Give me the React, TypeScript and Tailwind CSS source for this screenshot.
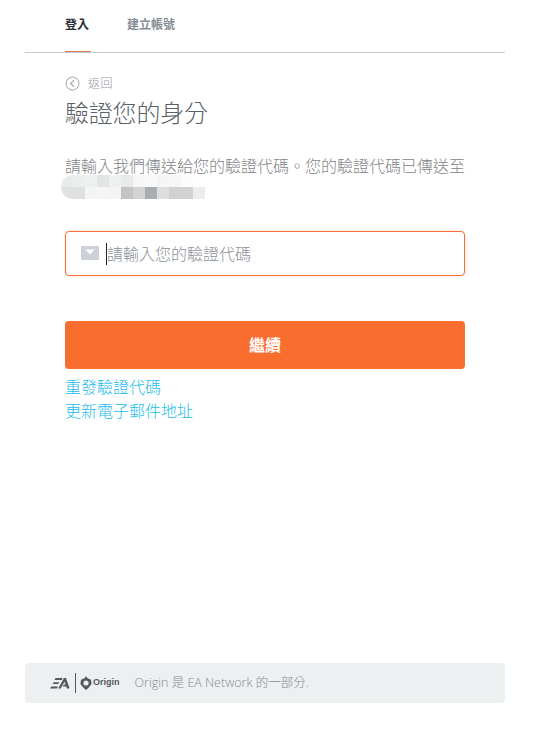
const font = { fontFamily: '"Open Sans","Noto Sans CJK TC",sans-serif' };
const row1 = ['#e9eaea','#eceded','#eeefef','#e3e4e6','#eeefef','#e9eaea','#f6f6f6','#f9f9f9','#f4f5f5','#f7f7f7','#fcfcfc','#ffffff'];
const row2 = ['#e0e1e2','#dfe0e1','#f3f4f4','#f5f5f5','#f4f4f4','#c2c4c6','#d2d4d4','#a9adb0','#dddfdf','#cfd1d3','#d0d2d3','#ebecec'];

function Pixels({ cols, round }: { cols: string[]; round: string }) {
  return (
    <div className={`flex h-[12px] overflow-hidden ${round}`}>
      {cols.map((c, i) => (
        <div key={i} className="h-full w-[12px]" style={{ backgroundColor: c }} />
      ))}
    </div>
  );
}

export default function App() {
  return (
    <div className="h-[753px] w-[545px] bg-white pl-[25px] pr-[40px] flex flex-col font-light" style={font}>
      <div className="flex h-[53px] gap-[37px] border-b border-[#c8c9cd] pl-[40px] text-[12px]">
        <div className="relative flex h-[52px] w-[26px] items-start justify-center pt-[16px] font-bold text-[#2b3038] whitespace-nowrap -indent-[2px]">
          登入
          <div className="absolute bottom-0 left-0 h-[1px] w-[26px] bg-[#d9764e]" />
        </div>
        <div className="-ml-[1px] pt-[16px] font-bold text-[#858a92] whitespace-nowrap">建立帳號</div>
      </div>

      <div className="flex flex-col pl-[40px] w-[440px]">
        <div className="mt-[23px] flex h-[16px] items-center gap-[8px] text-[12px] tracking-[0.5px] text-[#93979c]">
          <svg className="-mt-[1px]" width="15" height="15" viewBox="0 0 15 15" fill="none" stroke="#a3a7ab" strokeWidth="1">
            <circle cx="7.5" cy="7.5" r="6.5" />
            <path d="M9 4.2 5.7 7.5 9 10.8" strokeWidth="1.2" />
          </svg>
          <span>返回</span>
        </div>
        <h1 className="mt-[4px] text-[24px] leading-[32px] font-extralight text-[#5a5f66] -tracking-[0.2px] translate-y-[1px]">驗證您的身分</h1>
        <p className="mt-[28px] text-[16px] leading-[20px] whitespace-nowrap text-[#7f8489] font-extralight">請輸入我們傳送給您的驗證代碼。您的驗證代碼已傳送至</p>

        <div className="-ml-[4px] mt-[-1px] flex w-[144px] flex-col">
          <Pixels cols={row1} round="rounded-tl-[12px]" />
          <Pixels cols={row2} round="rounded-bl-[12px]" />
        </div>

        <div className="mt-[32px] flex h-[45px] items-center rounded-[4px] border border-[#f56f37] pl-[15px] shadow-[0_0_2px_rgba(245,111,55,0.35)]">
          <svg className="-mt-[1px]" width="18" height="14" viewBox="0 0 18 14">
            <rect width="18" height="14" rx="1" fill="#cdd0d8" />
            <path d="M4.5 3.5h9L9 8.5z" fill="#fff" />
          </svg>
          <div className="ml-[7px] h-[22px] w-[1px] bg-[#1f2329]" />
          <span className="text-[16px] font-extralight text-[#8b9096]">請輸入您的驗證代碼</span>
        </div>

        <button className="mt-[45px] h-[48px] w-full rounded-[4px] bg-[#f96d2f] text-[16px] font-bold text-white">繼續</button>

        <a className="mt-[8px] text-[16px] leading-[20px] text-[#1cbcec]">重發驗證代碼</a>
        <a className="text-[16px] leading-[20px] mt-[4px] text-[#1cbcec]">更新電子郵件地址</a>
      </div>

      <div className="mt-[242px] flex h-[40px] items-center rounded-[4px] bg-[#edf0f1] pl-[25px]">
        <svg width="20" height="11" viewBox="0 0 20 11" fill="#54585e">
          <path d="M5.5 0h7.4l-1.2 1.9H4.4zM3.6 4.2h5.6l-1 1.8H2.6zM1.4 8.5h6.6L6.9 10.6H0zM14 0h2l3.6 10.6h-2.6l-.7-2.2h-3.7l1.2-1.8h1.9L14.4 3.8 10.7 10.6H8.2z" />
        </svg>
        <div className="ml-[5px] h-[20px] w-[1px] bg-[#54585e]" />
        <svg className="ml-[4px]" width="12" height="14" viewBox="0 0 12 14">
          <path d="M6 0 7.2 2.1 11 3.8 11.6 8 8.5 11.8 6 14 3.5 11.8.4 8 1 3.8 4.8 2.1z" fill="#54585e" />
          <circle cx="6" cy="7" r="2.6" fill="#edf0f1" />
        </svg>
        <span className="ml-[1px] text-[9px] font-bold text-[#54585e]" style={{ fontFamily: '"Liberation Sans",sans-serif' }}>Origin</span>
        <span className="ml-[15px] text-[12.5px] text-[#858a90] whitespace-nowrap">Origin 是 EA Network 的一部分.</span>
      </div>
    </div>
  );
}
